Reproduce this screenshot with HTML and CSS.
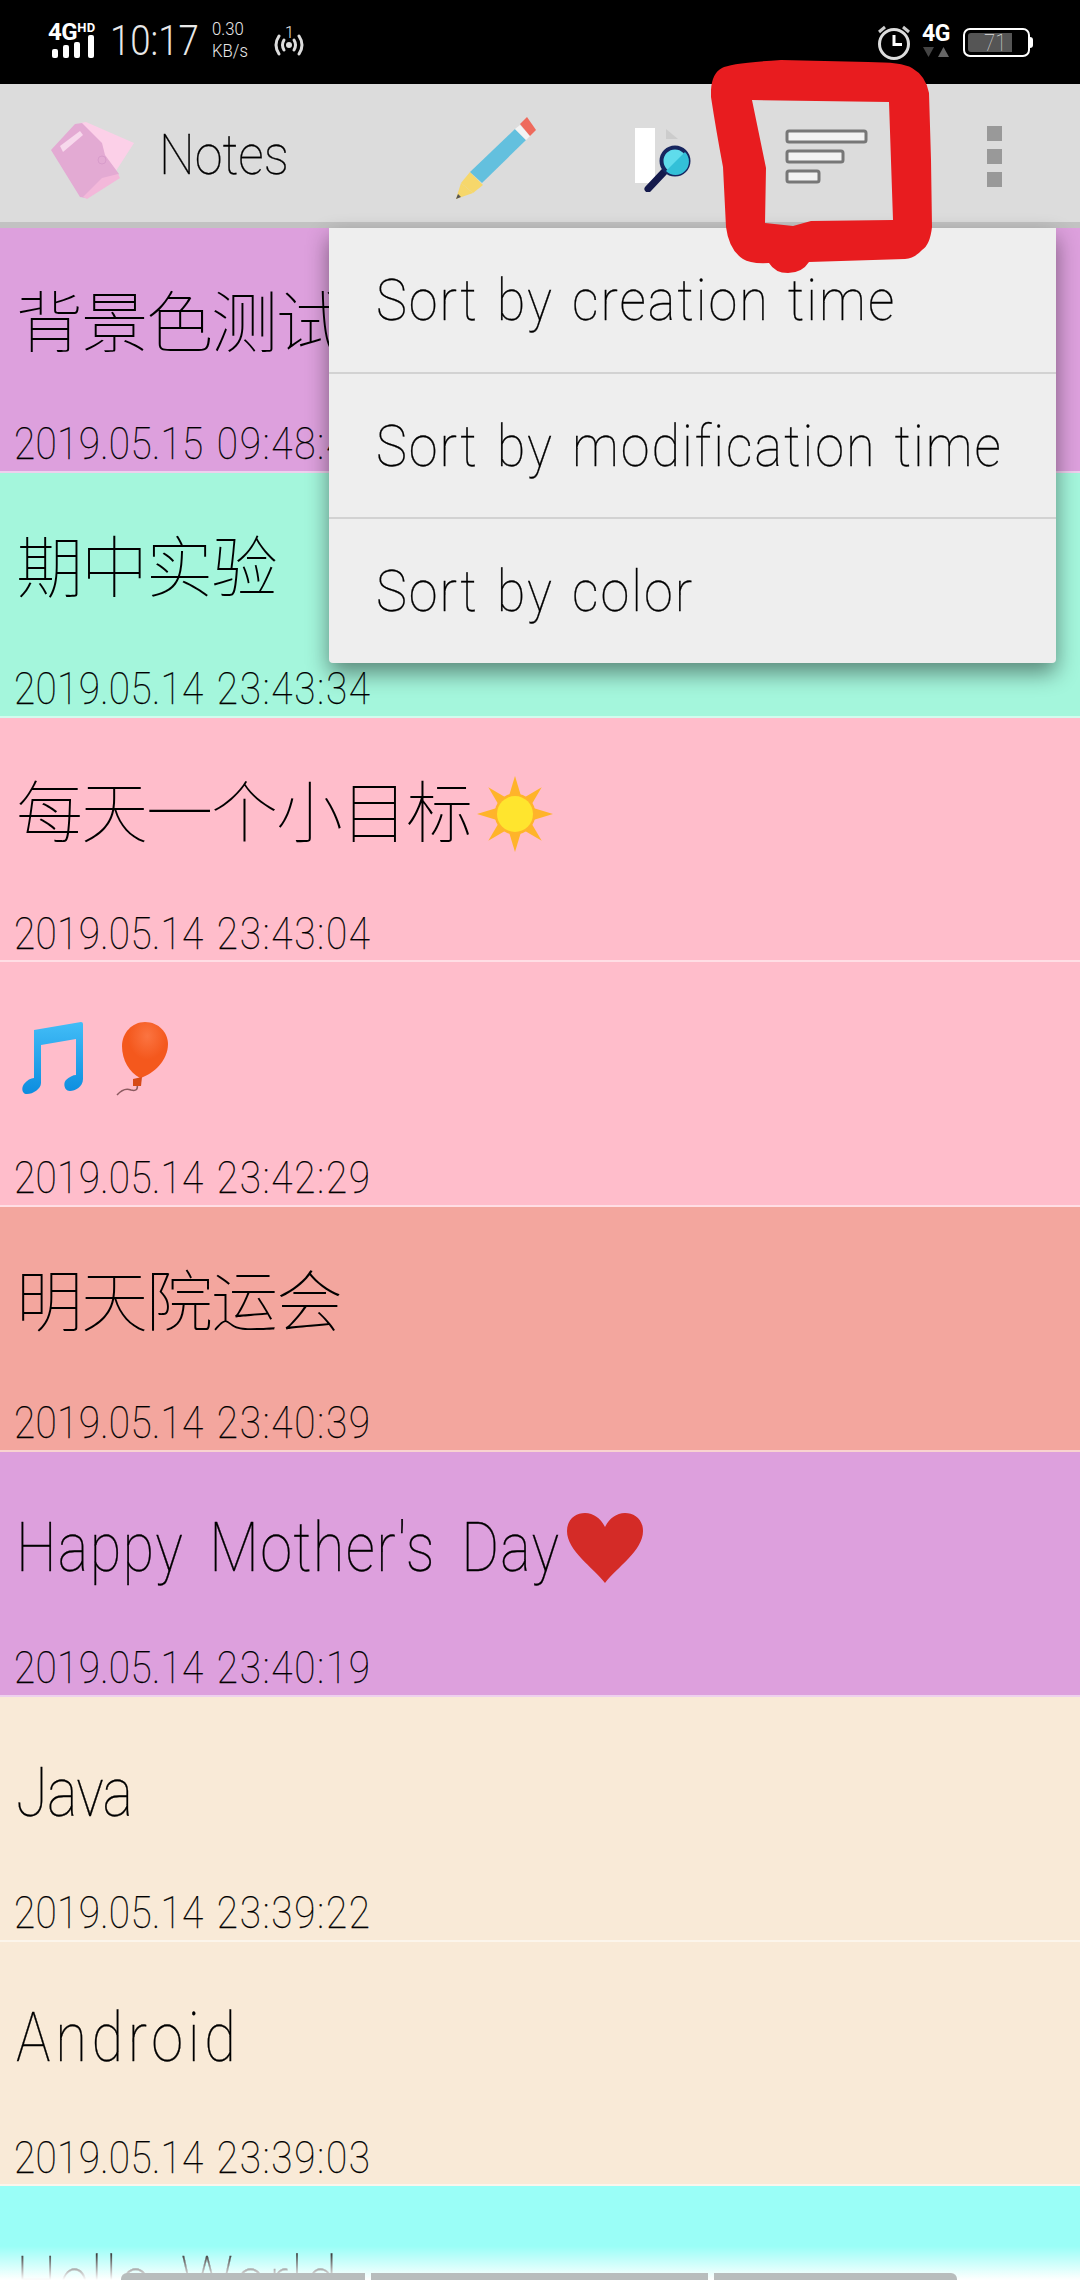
FILE: index.html
```html
<!DOCTYPE html>
<html lang="en">
<head>
<meta charset="utf-8">
<title>Notes</title>
<link rel="stylesheet" href="styles.css">
</head>
<body>
<div class="phone">
  <header class="status">
    <div class="net">
      <div class="net-text"><span class="net-4g">4G</span><span class="net-hd">HD</span></div>
      <svg class="bars" width="46" height="24" viewBox="0 0 46 24"><g fill="#fff"><rect x="4" y="14" width="6" height="9" rx="2"/><rect x="15" y="10" width="6" height="13" rx="2"/><rect x="26" y="7" width="6" height="16" rx="2"/><rect x="40" y="0" width="6" height="23" rx="2"/></g></svg>
    </div>
    <span class="clock">10:17</span>
    <div class="speed"><span>0.30</span><span>KB/s</span></div>
    <div class="hotspot">
      <svg width="34" height="30" viewBox="0 0 34 30"><g fill="none" stroke="#ddd" stroke-width="3" stroke-linecap="round"><path d="M7 9Q1 18 7 27"/><path d="M27 9Q33 18 27 27"/><path d="M12 13Q9 18 12 23"/><path d="M22 13Q25 18 22 23"/></g><circle cx="17" cy="18" r="3" fill="#ddd"/></svg>
      <span class="hotspot-num">1</span>
    </div>
    <div class="status-right">
      <svg width="36" height="36" viewBox="0 0 36 36"><circle cx="18" cy="20" r="14.5" fill="none" stroke="#ddd" stroke-width="3"/><path d="M18 11V20.5H26" fill="none" stroke="#fff" stroke-width="3"/><path d="M3 8L9 3M33 8L27 3" stroke="#ccc" stroke-width="3"/></svg>
      <div class="mobile">
        <span class="mobile-4g">4G</span>
        <svg width="26" height="10" viewBox="0 0 26 10"><path d="M0 0H11L5.500 10Z" fill="#444"/><path d="M15 10H26L20.500 0Z" fill="#666"/></svg>
      </div>
      <div class="battery"><div class="battery-level"></div><span class="battery-num">71</span></div>
      <div class="battery-nub"></div>
    </div>
  </header>

  <nav class="appbar">
    <svg class="logo" width="88" height="80" viewBox="0 0 88 80"><path d="M30 1L36 0L84 21L64 52L50 30Z" fill="#fcd0e8"/><path d="M1 28L25 2L32 1L52 21L55 33L69 52L36 76L30 75Z" fill="#e3aad3"/><path d="M52 56L68 52L70 56L37 77L33 75Z" fill="#f3b8da"/><path d="M10 24L30 9L33 13L13 30Z" fill="#f7d8ec"/><circle cx="52" cy="38" r="4" fill="none" stroke="#d89ccb" stroke-width="1"/></svg>
    <span class="appname"><span class="latin-app">Notes</span></span>
    <svg class="pencil" width="82" height="84" viewBox="0 0 82 84"><path d="M0 82L5 66L17 76Z" fill="#f6d76b"/><path d="M0 82L2 77L5 80Z" fill="#555"/><path d="M5 66L14 55L27 68L17 76Z" fill="#f6d76b"/><path d="M14 55L59 12L70 23L26 66Z" fill="#63c0de"/><path d="M59 12L64 8L74 19L70 23Z" fill="#f3f3f3"/><path d="M64 7L71 0L80 13L74 19Z" fill="#ee6a5c"/></svg>
    <svg class="search" width="58" height="68" viewBox="0 0 58 68"><rect x="1" y="4" width="20" height="55" fill="#fff"/><path d="M32 5L44 15H32Z" fill="#ccc"/><path d="M14 65L30 48" stroke="#141a4c" stroke-width="7" stroke-linecap="round"/><circle cx="41" cy="37" r="13.500" fill="#5fdcec" stroke="#17265f" stroke-width="4"/><path d="M32 47L51 28A13 13 0 0 1 32 47Z" fill="#33c0d8"/></svg>
    <svg class="sort" width="84" height="56" viewBox="0 0 84 56"><g fill="#f2f2f2" stroke="#777" stroke-width="3"><rect x="2" y="2" width="79" height="11" rx="2"/><rect x="2" y="22" width="56" height="11" rx="2"/><rect x="2" y="42" width="32" height="11" rx="2"/></g></svg>
    <div class="overflow"><i></i><i></i><i></i></div>
  </nav>

  <main class="list">
    <article class="note plum"><h2 class="note-title">背景色测试</h2><time class="note-date">2019.05.15 <span class="date-time">09:48:40</span></time></article>
    <article class="note mint"><h2 class="note-title">期中实验</h2><time class="note-date">2019.05.14 <span class="date-time">23:43:34</span></time></article>
    <article class="note pink"><h2 class="note-title">每天一个小目标<svg class="emoji sun" width="76" height="76" viewBox="0 0 74 74"><g fill="#ffb42a"><path d="M37 0L43 20H31Z"/><path d="M37 74L31 54H43Z"/><path d="M0 37L20 31V43Z"/><path d="M74 37L54 43V31Z"/><path d="M11 11L28 21L21 28Z"/><path d="M63 11L53 28L46 21Z"/><path d="M11 63L21 46L28 53Z"/><path d="M63 63L46 53L53 46Z"/></g><circle cx="37" cy="37" r="20" fill="#ffb42a"/><circle cx="37" cy="37" r="17.500" fill="#ffe52e"/></svg></h2><time class="note-date">2019.05.14 <span class="date-time">23:43:04</span></time></article>
    <article class="note pink"><h2 class="note-title"><svg class="emoji music" width="62" height="74" viewBox="0 0 62 74"><defs><linearGradient id="noteblue" x1="0" y1="0" x2="0" y2="1"><stop offset="0" stop-color="#42bdf7"/><stop offset="1" stop-color="#0c8ddf"/></linearGradient></defs><path d="M12 9L59 1Q61 1 61 3V58C61 66 53 70 48 70C42 70 41 62 44 59C47 56 51 54 54 54V18L19 24V62C19 68 11 73 5 73C0 73 -1 67 2 63C5 59 9 57 12 57Z" fill="url(#noteblue)"/></svg><svg class="emoji balloon" width="54" height="76" viewBox="0 0 54 76"><defs><radialGradient id="balloonred" cx=".55" cy=".25" r=".7"><stop offset="0" stop-color="#fb7441"/><stop offset=".6" stop-color="#f4581d"/></radialGradient></defs><path d="M21 64Q23 72 15 70Q8 67 1 75" fill="none" stroke="#8b5a60" stroke-width="1.500"/><path d="M29 2C43 2 52 13 52 24C52 40 38 54 24 58C13 52 6 40 6 26C6 13 16 2 29 2Z" fill="url(#balloonred)"/><path d="M17 59L26 57L25 66L17 66Z" fill="#d64a18"/></svg></h2><time class="note-date">2019.05.14 <span class="date-time">23:42:29</span></time></article>
    <article class="note salmon"><h2 class="note-title">明天院运会</h2><time class="note-date">2019.05.14 <span class="date-time">23:40:39</span></time></article>
    <article class="note plum"><h2 class="note-title"><span class="latin">Happy Mother's Day</span><svg class="emoji heart" width="76" height="70" viewBox="0 0 76 70"><path d="M38 70C26 54 0 38 0 18C0 6 9 0 18 0C27 0 34 6 38 14C42 6 49 0 58 0C67 0 76 6 76 18C76 38 50 54 38 70Z" fill="#d42b27"/></svg></h2><time class="note-date">2019.05.14 <span class="date-time">23:40:19</span></time></article>
    <article class="note cream"><h2 class="note-title"><span class="latin latin-tight">Java</span></h2><time class="note-date">2019.05.14 <span class="date-time">23:39:22</span></time></article>
    <article class="note cream"><h2 class="note-title"><span class="latin latin-wide">Android</span></h2><time class="note-date">2019.05.14 <span class="date-time">23:39:03</span></time></article>
    <article class="note cyan"><h2 class="note-title"><span class="latin latin-loose">Hello World</span></h2></article>
  </main>

  <div class="sort-menu">
    <div class="menu-item"><span class="menu-label">Sort by creation time</span></div>
    <div class="menu-item"><span class="menu-label">Sort by modification time</span></div>
    <div class="menu-item"><span class="menu-label">Sort by color</span></div>
  </div>

  <svg class="scribble" width="1080" height="280" viewBox="0 0 1080 280"><path fill="#e81c1f" fill-rule="evenodd" d="M711 90Q712 73 722 68Q730 63 781 60L868 62Q902 62 912 68Q926 76 929 93L931 160L932 227Q930 245 922 250Q915 258 905 259L809 262Q802 273 788 273Q775 273 769 263Q750 264 743 259Q729 250 726 227L723 167Q716 130 711 97ZM752 100L766 168L765 223L793 226L811 221L893 220L889 102Z"/></svg>

  <div class="fade"></div>
  <div class="tabs"><span class="tab tab-a"></span><span class="tab tab-b"></span><span class="tab tab-c"></span></div>
</div>
</body>
</html>
```
FILE: styles.css
```css
* { box-sizing: border-box; }
html, body { margin: 0; padding: 0; }
body { font-family: Roboto, "Noto Sans CJK SC", sans-serif; font-weight: 100; color: #000; }
.phone { position: relative; width: 1080px; height: 2280px; overflow: hidden; background: #fff; }

.status { display: flex; align-items: flex-start; height: 84px; background: #000; color: #e8e8e8; padding-left: 48px; }
.net { width: 50px; margin-top: 23px; display: flex; flex-direction: column; }
.net-text { display: flex; height: 12px; color: #fff; font-weight: 700; line-height: 18px; }
.net-4g { font-size: 24px; letter-spacing: -0.5px; }
.net-hd { font-size: 13px; line-height: 10px; margin-left: 0; letter-spacing: 0.5px; }
.bars { flex: none; margin-top: 0; }
.clock { display: inline-block; margin-left: 12px; margin-top: 17px; font-size: 42px; line-height: 48px; letter-spacing: 0; font-weight: 300; width: 102px; transform: scaleX(.87); transform-origin: left center; }
.speed { display: flex; flex-direction: column; margin-top: 18px; font-size: 19px; line-height: 22px; width: 60px; font-weight: 300; transform: scaleX(.88); transform-origin: left center; }
.hotspot { position: relative; margin-top: 27px; }
.hotspot-num { position: absolute; left: 13px; top: -4px; font-size: 16px; line-height: 20px; font-weight: 300; }
.status-right { display: flex; align-items: flex-start; margin-left: auto; margin-right: 47px; padding-top: 24px; }
.mobile { display: flex; flex-direction: column; align-items: center; width: 30px; margin-left: 9px; margin-top: -1px; }
.mobile-4g { color: #fff; font-weight: 700; font-size: 23px; line-height: 22px; letter-spacing: -0.5px; }
.mobile svg { margin-top: 2px; }
.battery { position: relative; width: 67px; height: 29px; margin-left: 12px; margin-top: 4px; border: 2px solid #fff; border-radius: 7px; display: flex; align-items: center; justify-content: center; }
.battery-level { position: absolute; left: 3px; top: 3px; bottom: 3px; width: 44px; background: #555; border-radius: 3px 0 0 3px; }
.battery-num { position: relative; left: -1px; font-size: 24px; color: #ddd; font-weight: 100; transform: scaleX(.85); }
.battery-nub { width: 3px; height: 11px; margin-top: 13px; background: #fff; border-radius: 0 3px 3px 0; }

.appbar { display: flex; align-items: flex-start; height: 144px; background: #dcdcdc; border-bottom: 6px solid #c2c2c2; }
.logo { margin-left: 50px; margin-top: 38px; flex: none; }
.appname { margin-left: 21px; margin-top: 38px; font-size: 56px; line-height: 66px; width: 170px; }
.latin-app { display: inline-block; transform: scaleX(.9); transform-origin: left center; -webkit-text-stroke: .3px #000; }
.pencil { margin-left: 127px; margin-top: 33px; flex: none; }
.search { margin-left: 96px; margin-top: 40px; flex: none; }
.sort { margin-left: 93px; margin-top: 45px; flex: none; }
.overflow { display: flex; flex-direction: column; gap: 8px; margin-left: 118px; margin-top: 42px; }
.overflow i { display: block; width: 15px; height: 15px; background: #999; }

.list { display: flex; flex-direction: column; }
.note { display: flex; flex-direction: column; height: 244.8px; padding: 51px 0 0 16px; border-bottom: 2px solid rgba(255,255,255,.5); overflow: hidden; flex: none; }
.note-title { display: flex; align-items: center; margin: 0; height: 90px; font-size: 67px; line-height: 90px; font-weight: 100; letter-spacing: -2px; white-space: nowrap; }
.latin { display: inline-block; font-size: 68px; letter-spacing: 1.500px; word-spacing: 12px; transform: scaleX(.85); transform-origin: left center; -webkit-text-stroke: .3px #000; }
.latin-tight { letter-spacing: -1px; }
.latin-wide { letter-spacing: 5.500px; }
.latin-loose { letter-spacing: 3px; }
.note-date { display: block; width: 500px; margin-top: 49px; margin-left: -2px; font-size: 44px; line-height: 52px; letter-spacing: .4px; word-spacing: 4px; font-weight: 100; white-space: nowrap; transform: scaleX(.88); transform-origin: left center; -webkit-text-stroke: .25px #000; }
.date-time { letter-spacing: 2px; }
.plum { background: #dda0dd; }
.mint { background: #a4f6dc; }
.pink { background: #ffbdcb; }
.salmon { background: #f3a69e; }
.cream { background: #f9ead7; }
.cyan { background: #9afef7; }
.emoji { flex: none; }
.sun { margin-left: 6px; }
.music { margin-left: 6px; margin-right: 32px; }
.heart { margin-left: -90px; }

.sort-menu { position: absolute; left: 329px; top: 228px; width: 727px; height: 435px; background: #eee; border-radius: 0 0 4px 4px; box-shadow: 0 10px 22px rgba(0,0,0,.45); display: flex; flex-direction: column; }
.menu-item { flex: 1; display: flex; align-items: center; padding-left: 47px; padding-bottom: 0; font-size: 58px; border-bottom: 2px solid #d2d2d2; white-space: nowrap; }
.menu-item:last-child { border-bottom: 0; }
.menu-label { display: inline-block; letter-spacing: 2.200px; word-spacing: 4px; transform: scaleX(.9); transform-origin: left center; -webkit-text-stroke: .3px #000; }

.scribble { position: absolute; left: 0; top: 0; pointer-events: none; }

.fade { position: absolute; left: 0; right: 0; bottom: 0; height: 34px; background: linear-gradient(rgba(255,255,255,0), #fff); }
.tabs { position: absolute; left: 121px; bottom: 0; display: flex; gap: 6px; }
.tab { display: block; height: 7px; background: #b8bdbd; }
.tab-a { width: 244px; border-radius: 6px 0 0 0; }
.tab-b { width: 337px; }
.tab-c { width: 243px; border-radius: 0 6px 0 0; }
```
